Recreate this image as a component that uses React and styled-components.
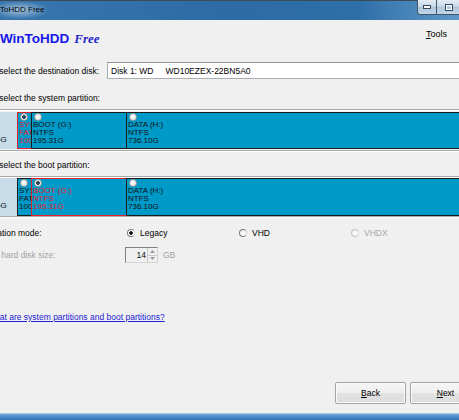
import React from "react";
import styled, { createGlobalStyle } from "styled-components";

const Global = createGlobalStyle`
  html, body { margin: 0; padding: 0; background: #f0f0f0; }
  body { font-family: "Liberation Sans", Arial, sans-serif; }
`;

const Window = styled.div`
  width: 459px;
  height: 420px;
  overflow: hidden;
  display: flex;
  flex-direction: column;
  background: #f0f0f0;
`;

const TitleBar = styled.div`
  height: 20px;
  flex: none;
  box-sizing: border-box;
  border-top: 1px solid #3d4b59;
  display: flex;
  justify-content: space-between;
  align-items: flex-start;
  background: linear-gradient(90deg, #3776ad 0%, #2c6ba5 50%, #2f6fa8 78%, #5f98c8 100%);
`;

const Title = styled.div`
  font-size: 8px;
  line-height: 18px;
  color: #000;
  white-space: nowrap;
  padding: 0 6px 0 0;
  background: radial-gradient(ellipse at 40% 50%, rgba(255,255,255,0.55), rgba(255,255,255,0) 70%);
`;

const Caption = styled.div`
  display: flex;
  margin-top: -1px;
  margin-right: -2px;
`;

const CapButton = styled.div`
  width: ${({ w }) => w}px;
  height: 15px;
  box-sizing: border-box;
  border: 1px solid #40566c;
  border-top: none;
  border-left-width: ${({ first }) => (first ? 1 : 0)}px;
  border-bottom-left-radius: ${({ first }) => (first ? 3 : 0)}px;
  background: linear-gradient(#e4edf6 0%, #c9d9e8 45%, #aec5da 50%, #c2d6e8 100%);
  display: flex;
  align-items: center;
  justify-content: center;
`;

const Body = styled.div`
  flex: 1;
  display: flex;
  flex-direction: column;
  font-size: 8.5px;
  color: #000;
`;

const Header = styled.div`
  display: flex;
  justify-content: space-between;
  align-items: flex-start;
  padding: 8px 12px 0 0;
  height: 22px;
`;

const Brand = styled.div`
  font: bold 13.5px/22px "Liberation Sans", Arial, sans-serif;
  color: #1818e8;
  white-space: nowrap;
`;

const BrandTag = styled.span`
  font: italic bold 13px "Liberation Serif", "Times New Roman", serif;
  color: #2626c8;
  margin-left: 5px;
`;

const Menu = styled.div`
  font-size: 9px;
  line-height: 12px;
  color: #000;
`;

const Key = styled.span`
  text-decoration: underline;
`;

const Row = styled.div`
  display: flex;
  align-items: center;
  flex: none;
  height: ${({ h }) => h || 16}px;
  margin-top: ${({ mt }) => mt || 0}px;
  margin-left: ${({ indent }) => (indent === undefined ? -25 : indent)}px;
  color: ${({ muted }) => (muted ? "#a3a3a3" : "#000")};
  white-space: nowrap;
`;

const Label = styled.div`
  width: ${({ w }) => w}px;
  flex: none;
  white-space: nowrap;
`;

const DiskInput = styled.div`
  width: 360px;
  height: 17px;
  flex: none;
  box-sizing: border-box;
  background: #fff;
  border: 1px solid #abadb3;
  border-top-color: #8f9298;
  display: flex;
  align-items: center;
  padding-left: 3px;
  gap: 12px;
`;

const Rule = styled.div`
  height: 0;
  flex: none;
  border-top: 1px solid #a9a9a9;
  border-bottom: 1px solid #ffffff;
  margin-top: ${({ mt }) => mt || 0}px;
`;

const Bar = styled.div`
  display: flex;
  flex: none;
  height: ${({ h }) => h}px;
  margin-top: ${({ mt }) => mt || 0}px;
  margin-left: -25px;
  width: 520px;
`;

const Segment = styled.div`
  width: ${({ w }) => (w ? `${w}px` : "auto")};
  flex: ${({ w }) => (w ? "none" : "1")};
  box-sizing: border-box;
  overflow: hidden;
  background: ${({ light }) => (light ? "#c7dbe8" : "#009ac9")};
  border: ${({ light, picked }) =>
    light ? "none" : `1px solid ${picked ? "#e3202c" : "#1b1b1b"}`};
  border-right: none;
  color: ${({ picked }) => (picked ? "#e3202c" : "#111")};
  display: flex;
  flex-direction: column;
  padding-left: 1px;
  font-size: 8px;
  line-height: 8px;
  white-space: nowrap;
`;

const SegLine = styled.span`
  overflow: hidden;
  text-overflow: clip;
`;

const SegRadio = styled.span`
  width: 8px;
  height: 8px;
  margin: 0 0 0 1px;
  border-radius: 50%;
  box-sizing: border-box;
  flex: none;
  border: 1px solid #9a9a9a;
  background: ${({ checked }) =>
    checked
      ? "radial-gradient(circle, #2a4a60 0 1.6px, #f4f4f4 2.2px)"
      : "radial-gradient(circle at 40% 35%, #ffffff, #e2e2e2)"};
`;

const SegGap = styled.span`
  height: 8px;
  flex: none;
`;

const Options = styled.div`
  display: flex;
`;

const Option = styled.div`
  width: 112px;
  display: flex;
  align-items: center;
  color: ${({ disabled }) => (disabled ? "#a8a8a8" : "#000")};
`;

const RadioDot = styled.span`
  width: 8px;
  height: 8px;
  margin-left: 2px;
  margin-right: 5px;
  border-radius: 50%;
  box-sizing: border-box;
  flex: none;
  border: 1px solid ${({ disabled }) => (disabled ? "#c4c4c4" : "#7c7c7c")};
  border-right-color: #d8d8d8;
  background: ${({ checked }) =>
    checked
      ? "radial-gradient(circle, #111 0 1.5px, #ffffff 2px)"
      : "radial-gradient(circle at 60% 60%, #ffffff, #e8e8e8)"};
`;

const Spin = styled.div`
  width: 33px;
  height: 16px;
  flex: none;
  box-sizing: border-box;
  border: 1px solid;
  border-color: #7e7e7e #d6d6d6 #d6d6d6 #7e7e7e;
  display: flex;
  background: #f0f0f0;
`;

const SpinValue = styled.div`
  flex: 1;
  text-align: right;
  padding-right: 1px;
  line-height: 14px;
  color: #111;
`;

const SpinArrows = styled.div`
  width: 9px;
  display: flex;
  flex-direction: column;
  border-left: 1px solid #c9c9c9;
`;

const SpinHalf = styled.div`
  flex: 1;
  display: flex;
  align-items: center;
  justify-content: center;
  border-bottom: ${({ top }) => (top ? "1px solid #c9c9c9" : "none")};
`;

const Unit = styled.span`
  margin-left: 5px;
`;

const HelpLink = styled.a`
  color: #2323d6;
  text-decoration: underline;
  cursor: pointer;
`;

const ButtonBar = styled.div`
  display: flex;
  justify-content: flex-end;
  gap: 4px;
  margin-top: 57px;
  margin-right: -22px;
  flex: none;
`;

const Button = styled.div`
  width: 71px;
  height: 22px;
  box-sizing: border-box;
  border: 1px solid #a4a4a4;
  border-radius: 2px;
  background: linear-gradient(#f6f6f6 0%, #eeeeee 48%, #e2e2e2 52%, #dcdcdc 100%);
  box-shadow: inset 0 0 0 1px #fbfbfb;
  display: flex;
  align-items: center;
  justify-content: center;
  font-size: 8.5px;
  color: #000;
`;

const Spacer = styled.div`
  flex: 1;
`;

const Frame = styled.div`
  height: 7px;
  flex: none;
  background: linear-gradient(#b8d3ec 0%, #5a97cf 30%, #2f73b4 100%);
`;

const parts = (boot) => [
  { w: 42, light: true, lines: ["Disk 0", "NTFS", "465.76G"] },
  { w: 14, picked: !boot, checked: !boot, lines: ["SYSTEM", "FAT32", "100MB"] },
  { w: 95, picked: boot, checked: boot, lines: ["BOOT (G:)", "NTFS", "195.31G"] },
  { lines: ["DATA (H:)", "NTFS", "736.10G"] },
];

function PartitionBar({ boot, h, mt }) {
  return (
    <Bar h={h} mt={mt}>
      {parts(boot).map((p, i) => (
        <Segment key={i} w={p.w} light={p.light} picked={p.picked}>
          {p.light ? <SegGap /> : <SegRadio checked={p.checked} />}
          {p.lines.map((l) => (
            <SegLine key={l}>{l}</SegLine>
          ))}
        </Segment>
      ))}
    </Bar>
  );
}

export default function App() {
  return (
    <>
      <Global />
      <Window>
        <TitleBar>
          <Title>ToHDD Free</Title>
          <Caption>
            <CapButton w={20} first>
              <svg width="8" height="4" viewBox="0 0 8 4">
                <rect x="0.5" y="0.5" width="7" height="3" fill="#fff" stroke="#34495e" />
              </svg>
            </CapButton>
            <CapButton w={24}>
              <svg width="8" height="7" viewBox="0 0 8 7">
                <rect x="0.5" y="0.5" width="7" height="6" fill="none" stroke="#34495e" />
                <rect x="1.5" y="1.5" width="5" height="4" fill="none" stroke="#fff" />
              </svg>
            </CapButton>
          </Caption>
        </TitleBar>
        <Body>
          <Header>
            <Brand>
              WinToHDD<BrandTag>Free</BrandTag>
            </Brand>
            <Menu>
              <Key>T</Key>ools
            </Menu>
          </Header>

          <Row mt={12} h={17} indent={-29}>
            <Label w={136}>Please select the destination disk:</Label>
            <DiskInput>
              <span>Disk 1: WD</span>
              <span>WD10EZEX-22BN5A0</span>
            </DiskInput>
          </Row>

          <Row mt={11} indent={-29}>
            <Label w={200}>Please select the system partition:</Label>
          </Row>
          <Rule mt={3} />
          <PartitionBar boot={false} h={37} mt={1} />
          <Rule mt={1} />

          <Row mt={5} indent={-29}>
            <Label w={200}>Please select the boot partition:</Label>
          </Row>
          <Rule mt={3} />
          <PartitionBar boot h={38} />
          <Rule />

          <Row mt={7}>
            <Label w={150}>Installation mode:</Label>
            <Options>
              <Option>
                <RadioDot checked />
                Legacy
              </Option>
              <Option>
                <RadioDot />
                VHD
              </Option>
              <Option disabled>
                <RadioDot disabled />
                VHDX
              </Option>
            </Options>
          </Row>

          <Row mt={6} muted>
            <Label w={150}>Virtual hard disk size:</Label>
            <Spin>
              <SpinValue>14</SpinValue>
              <SpinArrows>
                <SpinHalf top>
                  <svg width="5" height="3" viewBox="0 0 5 3">
                    <path d="M0 3 L2.5 0 L5 3 Z" fill="#9a9a9a" />
                  </svg>
                </SpinHalf>
                <SpinHalf>
                  <svg width="5" height="3" viewBox="0 0 5 3">
                    <path d="M0 0 L2.5 3 L5 0 Z" fill="#9a9a9a" />
                  </svg>
                </SpinHalf>
              </SpinArrows>
            </Spin>
            <Unit>GB</Unit>
          </Row>

          <Row mt={46} indent={-13}>
            <HelpLink>What are system partitions and boot partitions?</HelpLink>
          </Row>

          <ButtonBar>
            <Button>
              <Key>B</Key>ack
            </Button>
            <Button>
              <Key>N</Key>ext
            </Button>
          </ButtonBar>
          <Spacer />
        </Body>
        <Frame />
      </Window>
    </>
  );
}
